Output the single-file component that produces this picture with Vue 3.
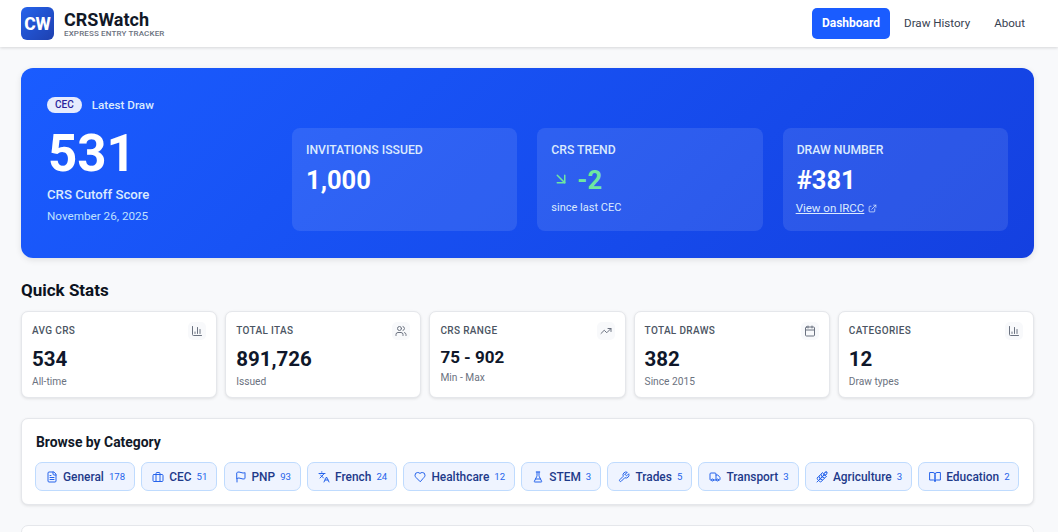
<script setup>
import { h } from "vue";

// lucide paths, circles and rects written out as arcs
const icons = {
  chart: ["M3 3v16a2 2 0 0 0 2 2h16", "M18 17V9", "M13 17V5", "M8 17v-3"],
  users: [
    "M16 21v-2a4 4 0 0 0-4-4H6a4 4 0 0 0-4 4v2",
    "M13 7a4 4 0 1 1-8 0 4 4 0 0 1 8 0z",
    "M22 21v-2a4 4 0 0 0-3-3.87",
    "M16 3.13a4 4 0 0 1 0 7.75",
  ],
  trending: ["M22 7l-8.5 8.5-5-5L2 17", "M16 7h6v6"],
  calendar: [
    "M8 2v4",
    "M16 2v4",
    "M5 4h14a2 2 0 0 1 2 2v14a2 2 0 0 1-2 2H5a2 2 0 0 1-2-2V6a2 2 0 0 1 2-2z",
    "M3 10h18",
  ],
  file: [
    "M15 2H6a2 2 0 0 0-2 2v16a2 2 0 0 0 2 2h12a2 2 0 0 0 2-2V7Z",
    "M14 2v4a2 2 0 0 0 2 2h4",
    "M10 9H8",
    "M16 13H8",
    "M16 17H8",
  ],
  briefcase: [
    "M4 7h16a2 2 0 0 1 2 2v10a2 2 0 0 1-2 2H4a2 2 0 0 1-2-2V9a2 2 0 0 1 2-2z",
    "M16 21V5a2 2 0 0 0-2-2h-4a2 2 0 0 0-2 2v16",
  ],
  flag: ["M4 15s1-1 4-1 5 2 8 2 4-1 4-1V3s-1 1-4 1-5-2-8-2-4 1-4 1z", "M4 22v-7"],
  languages: ["m5 8 6 6", "m4 14 6-6 2-3", "M2 5h12", "M7 2h1", "m22 22-5-10-5 10", "M14 18h6"],
  heart: [
    "M19 14c1.49-1.46 3-3.21 3-5.5A5.5 5.5 0 0 0 16.5 3c-1.76 0-3 .5-4.5 2-1.5-1.5-2.74-2-4.5-2A5.5 5.5 0 0 0 2 8.5c0 2.3 1.5 4.05 3 5.5l7 7Z",
  ],
  flask: [
    "M10 2v7.527a2 2 0 0 1-.211.896L4.72 20.55a1 1 0 0 0 .9 1.45h12.76a1 1 0 0 0 .9-1.45l-5.069-10.127A2 2 0 0 1 14 9.527V2",
    "M8.5 2h7",
    "M7 16h10",
  ],
  wrench: [
    "M14.7 6.3a1 1 0 0 0 0 1.4l1.6 1.6a1 1 0 0 0 1.4 0l3.77-3.77a6 6 0 0 1-7.94 7.94l-6.91 6.91a2.12 2.12 0 0 1-3-3l6.91-6.91a6 6 0 0 1 7.94-7.94l-3.76 3.76z",
  ],
  truck: [
    "M14 18V6a2 2 0 0 0-2-2H4a2 2 0 0 0-2 2v11a1 1 0 0 0 1 1h2",
    "M15 18H9",
    "M19 18h2a1 1 0 0 0 1-1v-3.65a1 1 0 0 0-.22-.624l-3.48-4.35A1 1 0 0 0 17.52 8H14",
    "M19 18a2 2 0 1 1-4 0 2 2 0 0 1 4 0z",
    "M9 18a2 2 0 1 1-4 0 2 2 0 0 1 4 0z",
  ],
  wheat: [
    "M2 22 16 8",
    "M3.47 12.53 5 11l1.53 1.53a3.5 3.5 0 0 1 0 4.94L5 19l-1.53-1.53a3.5 3.5 0 0 1 0-4.94Z",
    "M7.47 8.53 9 7l1.53 1.53a3.5 3.5 0 0 1 0 4.94L9 15l-1.53-1.53a3.5 3.5 0 0 1 0-4.94Z",
    "M11.47 4.53 13 3l1.53 1.53a3.5 3.5 0 0 1 0 4.94L13 11l-1.53-1.53a3.5 3.5 0 0 1 0-4.94Z",
    "M20 2h2v2a4 4 0 0 1-4 4h-2V6a4 4 0 0 1 4-4Z",
    "M11.47 17.47 13 19l-1.53 1.53a3.5 3.5 0 0 1-4.94 0L5 19l1.53-1.53a3.5 3.5 0 0 1 4.94 0Z",
    "M15.47 13.47 17 15l-1.53 1.53a3.5 3.5 0 0 1-4.94 0L9 15l1.53-1.53a3.5 3.5 0 0 1 4.94 0Z",
    "M19.47 9.47 21 11l-1.53 1.53a3.5 3.5 0 0 1-4.94 0L13 11l1.53-1.53a3.5 3.5 0 0 1 4.94 0Z",
  ],
  book: ["M2 3h6a4 4 0 0 1 4 4v14a3 3 0 0 0-3-3H2z", "M22 3h-6a4 4 0 0 0-4 4v14a3 3 0 0 1 3-3h7z"],
  arrow: ["m7 7 10 10", "M17 7v10H7"],
  external: ["M15 3h6v6", "M10 14 21 3", "M18 13v6a2 2 0 0 1-2 2H5a2 2 0 0 1-2-2V8a2 2 0 0 1 2-2h3"],
};

const Icon = (props) =>
  h(
    "svg",
    {
      viewBox: "0 0 24 24",
      width: props.size,
      height: props.size,
      fill: "none",
      stroke: "currentColor",
      "stroke-width": 2,
      "stroke-linecap": "round",
      "stroke-linejoin": "round",
    },
    icons[props.name].map((d) => h("path", { d }))
  );
Icon.props = ["name", "size"];

const stats = [
  { label: "AVG CRS", value: "534", note: "All-time", icon: "chart" },
  { label: "TOTAL ITAS", value: "891,726", note: "Issued", icon: "users" },
  { label: "CRS RANGE", value: "75 - 902", note: "Min - Max", icon: "trending", small: true },
  { label: "TOTAL DRAWS", value: "382", note: "Since 2015", icon: "calendar" },
  { label: "CATEGORIES", value: "12", note: "Draw types", icon: "chart" },
];

const categories = [
  { name: "General", count: 178, icon: "file" },
  { name: "CEC", count: 51, icon: "briefcase" },
  { name: "PNP", count: 93, icon: "flag" },
  { name: "French", count: 24, icon: "languages" },
  { name: "Healthcare", count: 12, icon: "heart" },
  { name: "STEM", count: 3, icon: "flask" },
  { name: "Trades", count: 5, icon: "wrench" },
  { name: "Transport", count: 3, icon: "truck" },
  { name: "Agriculture", count: 3, icon: "wheat" },
  { name: "Education", count: 2, icon: "book" },
];
</script>

<template>
  <div class="page">
    <header class="topbar">
      <div class="brand">
        <div class="logo">CW</div>
        <div>
          <div class="brand-name">CRSWatch</div>
          <div class="brand-sub">EXPRESS ENTRY TRACKER</div>
        </div>
      </div>
      <nav class="nav">
        <a class="nav-link active">Dashboard</a>
        <a class="nav-link">Draw History</a>
        <a class="nav-link">About</a>
      </nav>
    </header>

    <main class="content">
      <section class="hero">
        <div class="hero-left">
          <div class="hero-tag">
            <span class="badge">CEC</span>
            <span class="latest">Latest Draw</span>
          </div>
          <div class="score">531</div>
          <div class="score-label">CRS Cutoff Score</div>
          <div class="score-date">November 26, 2025</div>
        </div>
        <div class="tiles">
          <div class="tile">
            <div class="tile-label">INVITATIONS ISSUED</div>
            <div class="tile-value">1,000</div>
          </div>
          <div class="tile">
            <div class="tile-label">CRS TREND</div>
            <div class="tile-value trend">
              <Icon name="arrow" :size="18" class="trend-icon" />
              <span>-2</span>
            </div>
            <div class="tile-note">since last CEC</div>
          </div>
          <div class="tile">
            <div class="tile-label">DRAW NUMBER</div>
            <div class="tile-value">#381</div>
            <div class="tile-link">
              <a>View on IRCC</a>
              <Icon name="external" :size="9" />
            </div>
          </div>
        </div>
      </section>

      <h2 class="section-title">Quick Stats</h2>
      <section class="stats">
        <div v-for="stat in stats" :key="stat.label" class="stat">
          <div class="stat-top">
            <span class="stat-label">{{ stat.label }}</span>
            <span class="stat-icon"><Icon :name="stat.icon" :size="12" /></span>
          </div>
          <div class="stat-value" :class="{ small: stat.small }">{{ stat.value }}</div>
          <div class="stat-note">{{ stat.note }}</div>
        </div>
      </section>

      <section class="browse">
        <h3 class="browse-title">Browse by Category</h3>
        <div class="chips">
          <a v-for="cat in categories" :key="cat.name" class="chip">
            <Icon :name="cat.icon" :size="12" class="chip-icon" />
            <span class="chip-name">{{ cat.name }}</span>
            <span class="chip-count">{{ cat.count }}</span>
          </a>
        </div>
      </section>

      <section class="next-card"></section>
    </main>
  </div>
</template>

<style>
html,
body {
  margin: 0;
  overflow: hidden;
}
</style>

<style scoped>
.page {
  height: 532px;
  overflow: hidden;
  background: #f8f9fb;
  font-family: Roboto, "Noto Sans", sans-serif;
  color: #0f172a;
}
.topbar {
  height: 47px;
  padding: 0 23px 0 21px;
  box-sizing: border-box;
  background: #fff;
  display: flex;
  justify-content: space-between;
  align-items: center;
  box-shadow: 0 1px 3px rgba(0, 0, 0, 0.14);
}
.brand {
  display: flex;
  align-items: center;
  gap: 10px;
}
.logo {
  width: 33px;
  height: 33px;
  border-radius: 6px;
  background: linear-gradient(135deg, #2563eb, #1e40af);
  color: #fff;
  font-weight: 800;
  font-size: 17.5px;
  display: flex;
  align-items: center;
  justify-content: center;
}
.brand-name {
  font-size: 18px;
  font-weight: 700;
  line-height: 19px;
  color: #111827;
}
.brand-sub {
  font-size: 8px;
  font-weight: 500;
  line-height: 9px;
  letter-spacing: 0.15px;
  color: #6b7280;
}
.nav {
  display: flex;
  align-items: center;
  gap: 4px;
}
.nav-link {
  padding: 0 10px;
  height: 31px;
  line-height: 31px;
  border-radius: 5px;
  font-size: 11.6px;
  color: #374151;
}
.nav-link.active {
  background: #1a5cff;
  color: #fff;
  font-size: 12px;
  font-weight: 700;
}
.content {
  padding: 21px 24px 0 21px;
}
.hero {
  height: 190px;
  box-sizing: border-box;
  padding: 27px 26px 27px;
  border-radius: 12px;
  background: linear-gradient(135deg, #1a5cff, #1440e0);
  color: #fff;
  display: flex;
  align-items: flex-end;
  box-shadow: 0 2px 6px rgba(0, 0, 0, 0.1);
}
.hero-left {
  width: 245px;
  flex: none;
  align-self: stretch;
}
.hero-tag {
  display: flex;
  align-items: center;
  gap: 10px;
  height: 20px;
}
.badge {
  background: #e6ebfd;
  color: #2a1f9c;
  font-size: 10px;
  font-weight: 500;
  line-height: 16px;
  padding: 0 8px;
  border-radius: 9px;
}
.latest {
  font-size: 11.7px;
  font-weight: 500;
  color: #dbeafe;
}
.score {
  font-size: 51px;
  font-weight: 700;
  line-height: 56px;
  margin-top: 11px;
  margin-left: 1px;
}
.score-label {
  font-size: 13.2px;
  font-weight: 500;
  line-height: 18px;
  margin-top: 4px;
  color: #dbeafe;
}
.score-date {
  font-size: 11.7px;
  line-height: 16px;
  margin-top: 4px;
  color: #bfe0ff;
}
.tiles {
  flex: 1;
  display: grid;
  grid-template-columns: repeat(3, 1fr);
  gap: 20px;
}
.tile {
  height: 103px;
  box-sizing: border-box;
  padding: 14px 14px 13px;
  border-radius: 8px;
  background: rgba(255, 255, 255, 0.1);
}
.tile-label {
  font-size: 12.2px;
  font-weight: 500;
  line-height: 17px;
  color: #dbeafe;
}
.tile-value {
  font-size: 25.5px;
  font-weight: 700;
  line-height: 32px;
  margin-top: 5px;
}
.trend {
  display: flex;
  align-items: center;
  gap: 7px;
  color: #6ee7a0;
}
.trend-icon {
  margin-left: 1px;
  margin-top: -3px;
}
.tile-note {
  font-size: 11px;
  line-height: 16px;
  margin-top: 4px;
  color: #dbeafe;
}
.tile-link {
  display: flex;
  align-items: center;
  gap: 4px;
  font-size: 11.5px;
  line-height: 16px;
  margin-top: 4px;
  margin-left: -1px;
  color: #dbeafe;
}
.tile-link a {
  text-decoration: underline;
}
.section-title {
  margin: 21px 0 10px;
  font-size: 17px;
  font-weight: 700;
  line-height: 22px;
  color: #0b1220;
}
.stats {
  display: grid;
  grid-template-columns: repeat(5, 1fr);
  gap: 8px;
}
.stat {
  height: 87px;
  box-sizing: border-box;
  padding: 10px 10px 0;
  background: #fff;
  border: 1px solid #e5e7eb;
  border-radius: 7px;
  box-shadow: 0 1px 3px rgba(0, 0, 0, 0.1);
}
.stat-top {
  display: flex;
  justify-content: space-between;
  align-items: flex-start;
  height: 18px;
}
.stat-label {
  font-size: 10px;
  font-weight: 500;
  line-height: 18px;
  letter-spacing: 0.35px;
  color: #4b5563;
}
.stat-icon {
  width: 18px;
  height: 18px;
  border-radius: 5px;
  background: #f8f9fb;
  color: #6b7280;
  display: flex;
  align-items: center;
  justify-content: center;
}
.stat-value {
  font-size: 20.5px;
  font-weight: 700;
  line-height: 26px;
  margin-top: 6px;
  color: #0f172a;
}
.stat-value.small {
  font-size: 17px;
  line-height: 22px;
  margin-bottom: 1px;
}
.stat-note {
  font-size: 10.2px;
  line-height: 13px;
  margin-top: 3px;
  color: #6b7280;
}
.browse {
  margin-top: 20px;
  height: 87px;
  box-sizing: border-box;
  padding: 15px 13px 0;
  background: #fff;
  border: 1px solid #e5e7eb;
  border-radius: 7px;
  box-shadow: 0 1px 3px rgba(0, 0, 0, 0.1);
}
.browse-title {
  margin: 0 0 11px 1px;
  font-size: 13.9px;
  font-weight: 700;
  line-height: 17px;
  color: #111827;
}
.chips {
  display: flex;
  gap: 6.4px;
}
.chip {
  height: 29px;
  box-sizing: border-box;
  padding: 0 8.8px 0 10px;
  display: flex;
  align-items: center;
  background: #eff4ff;
  border: 1px solid #bfdbfe;
  border-radius: 7px;
  font-size: 11.9px;
  color: #1e3a8a;
  white-space: nowrap;
}
.chip-icon {
  color: #2563eb;
  margin-right: 5px;
}
.chip-name {
  font-weight: 500;
}
.chip-count {
  margin-left: 5px;
  font-size: 9.6px;
  color: #2563eb;
}
.next-card {
  margin-top: 20px;
  height: 60px;
  background: #fff;
  border: 1px solid #e5e7eb;
  border-radius: 7px;
}
</style>
